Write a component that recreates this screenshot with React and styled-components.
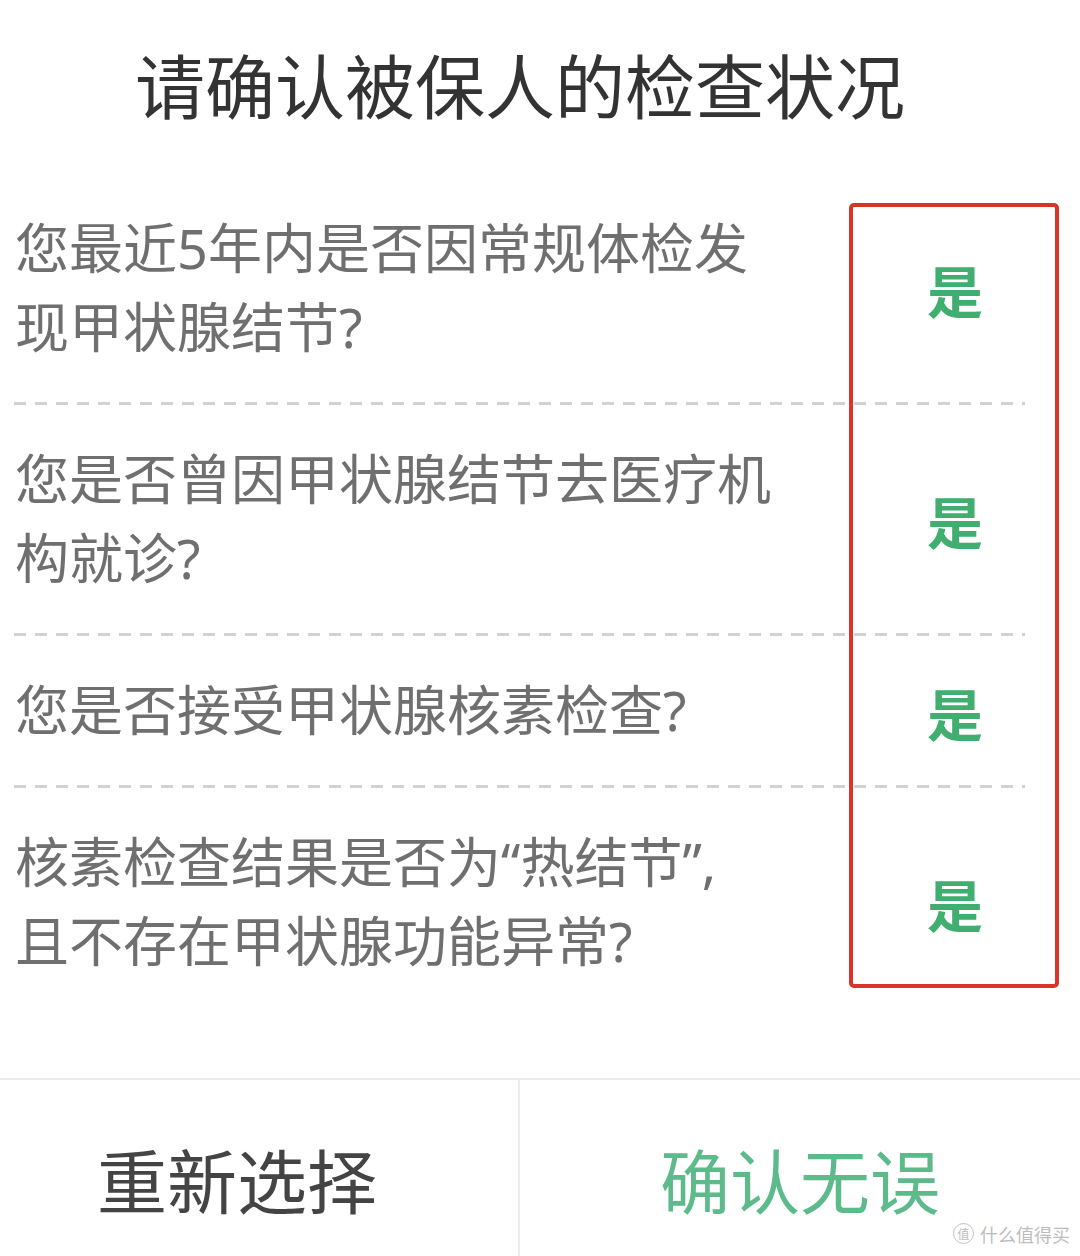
import styled, {createGlobalStyle} from 'styled-components'

const GlobalStyle = createGlobalStyle`
  html, body {
    margin: 0;
    padding: 0;
    background: #fff;
  }
  body {
    font-family: "Noto Sans CJK SC", "Noto Sans", sans-serif;
  }
`

const Page = styled.div`
  position: relative;
  width: 1080px;
  height: 1256px;
  overflow: hidden;
  background: #fff;
  display: flex;
  flex-direction: column;
`

const Title = styled.h1`
  margin: 0;
  height: 174px;
  padding-right: 40px;
  padding-bottom: 8px;
  box-sizing: border-box;
  display: flex;
  align-items: center;
  justify-content: center;
  font-size: 70px;
  font-weight: 400;
  color: #333;
`

const List = styled.div`
  padding: 0 55px 0 14px;
`

const Row = styled.div`
  display: grid;
  grid-template-columns: 1fr 140px;
  align-items: center;
  padding: 35px 0;
`

const Question = styled.div`
  padding-left: 1px;
  font-family: "Noto Sans", "Noto Sans CJK SC", sans-serif;
  font-size: 54px;
  line-height: 79px;
  color: #6f6f6f;
  white-space: nowrap;
`

const Answer = styled.div`
  text-align: center;
  font-size: 56px;
  line-height: 1;
  font-weight: 700;
  color: #3fae6f;
  padding-top: 2px;
`

const Divider = styled.div`
  height: 3px;
  background: repeating-linear-gradient(to right, #d2d2d2 0 12px, transparent 12px 21px);
`

const Footer = styled.div`
  margin-top: auto;
  height: 176px;
  border-top: 2px solid #ebebeb;
  display: grid;
  grid-template-columns: 520px 1fr;
`

const FooterButton = styled.div`
  display: flex;
  align-items: center;
  justify-content: center;
  padding-top: 20px;
  padding-right: ${p => p.$shift || 0}px;
  font-size: 70px;
  color: ${p => p.$primary ? '#5cba8b' : '#444'};
  border-right: ${p => p.$primary ? 'none' : '2px solid #ececec'};
`

const Highlight = styled.div`
  position: absolute;
  left: 849px;
  top: 203px;
  width: 210px;
  height: 785px;
  box-sizing: border-box;
  border: 4px solid #d8342c;
  border-radius: 5px;
  pointer-events: none;
`

const Watermark = styled.div`
  position: absolute;
  right: 10px;
  bottom: 12px;
  display: flex;
  align-items: center;
  gap: 6px;
  font-size: 18px;
  line-height: 1;
  color: #bdbdbd;
`

const Badge = styled.span`
  width: 19px;
  height: 19px;
  border: 1.5px solid #c2c2c2;
  border-radius: 50%;
  display: flex;
  align-items: center;
  justify-content: center;
  font-size: 12px;
`

const questions = [
  ['您最近5年内是否因常规体检发', '现甲状腺结节?'],
  ['您是否曾因甲状腺结节去医疗机', '构就诊?'],
  ['您是否接受甲状腺核素检查?'],
  ['核素检查结果是否为“热结节”,', '且不存在甲状腺功能异常?'],
]

export default function App() {
  return (
    <Page>
      <GlobalStyle/>
      <Title>请确认被保人的检查状况</Title>
      <List>
        {questions.map((lines, i) => (
          <div key={i}>
            <Row>
              <Question>
                {lines.map((line, j) => <div key={j}>{line}</div>)}
              </Question>
              <Answer>是</Answer>
            </Row>
            {i < questions.length - 1 ? <Divider/> : null}
          </div>
        ))}
      </List>
      <Footer>
        <FooterButton $shift={44}>重新选择</FooterButton>
        <FooterButton $primary>确认无误</FooterButton>
      </Footer>
      <Highlight/>
      <Watermark>
        <Badge>值</Badge>
        <span>什么值得买</span>
      </Watermark>
    </Page>
  )
}
